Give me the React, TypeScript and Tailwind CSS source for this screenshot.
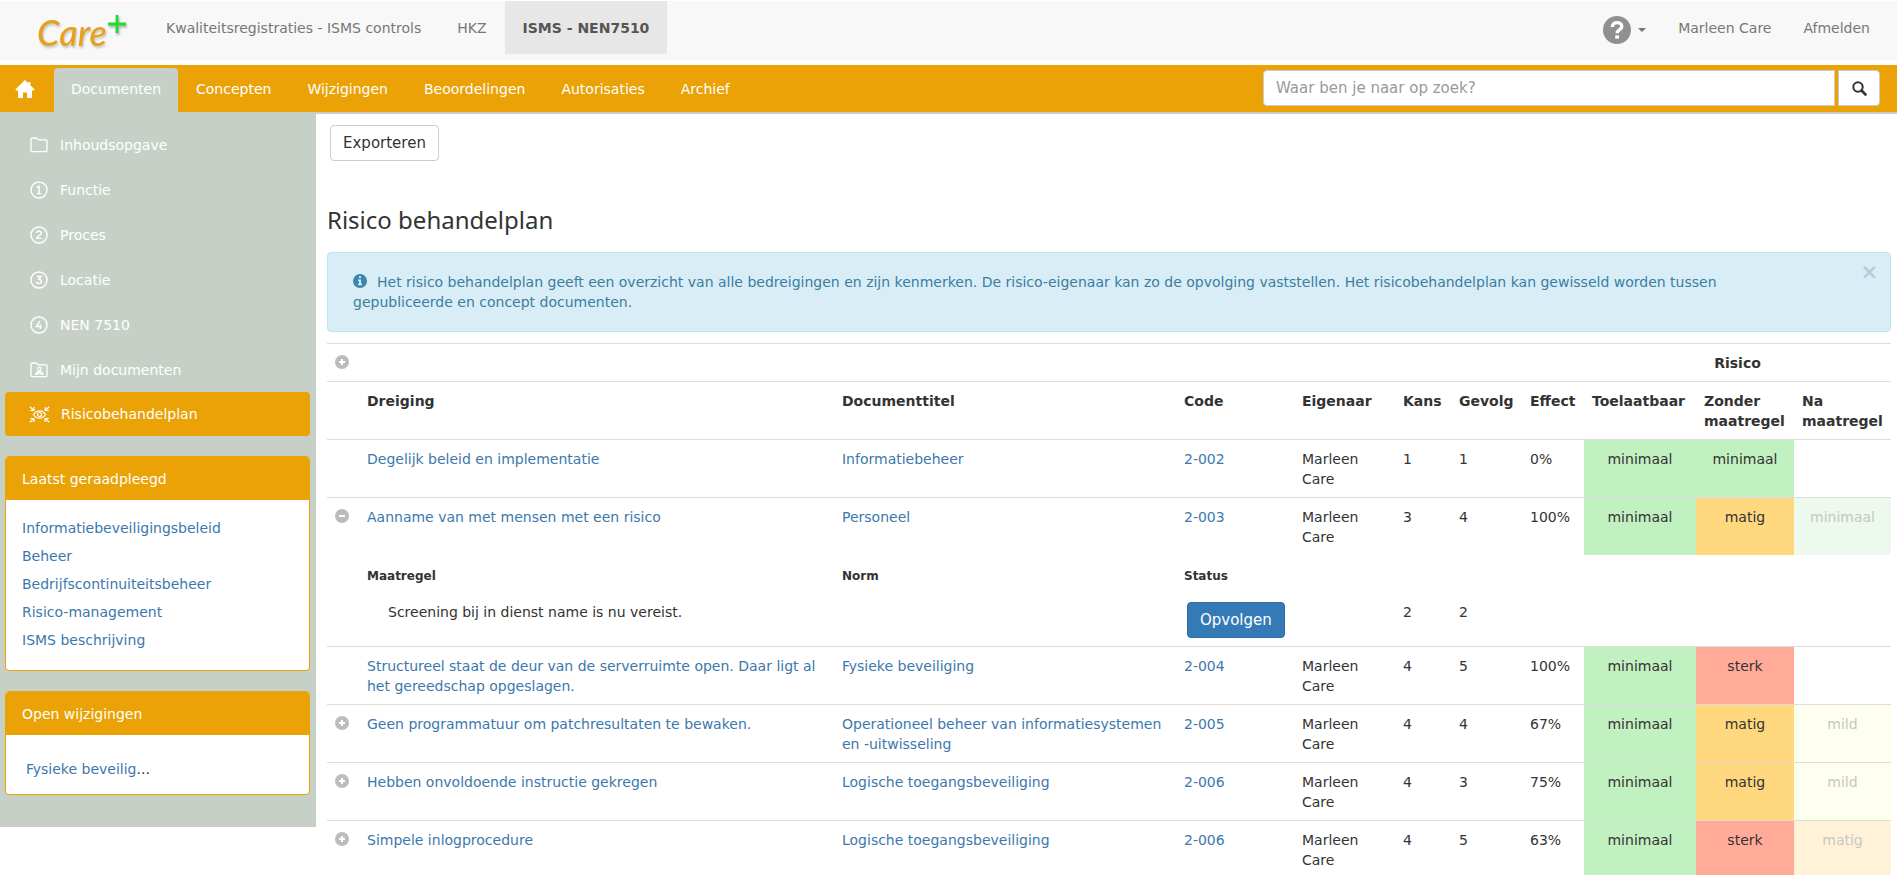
import type { ReactNode } from "react";

const FONT = "font-['Verdana','DejaVu_Sans',sans-serif]";

function CircleIcon({ kind, className }: { kind: "plus" | "minus" | "info" | "help"; className: string }) {
  return (
    <svg viewBox="0 0 14 14" className={className} aria-hidden="true">
      <circle cx="7" cy="7" r="7" fill="currentColor" />
      {kind === "plus" && <path d="M7 4v6M4 7h6" stroke="#fff" strokeWidth="2" />}
      {kind === "minus" && <path d="M4 7h6" stroke="#fff" strokeWidth="2" />}
      {kind === "info" && <path d="M6 2.2h2v1.8H6zM5 5.4h3v4.4h1v1.5H5V9.8h1V6.9H5z" fill="#d9edf7" />}
      {kind === "help" && (
        <>
          <path d="M4.7 5.5c0-1.5 1-2.200 2.300-2.200s2.400.7 2.400 1.900c0 1.700-2.300 1.500-2.300 3.400" fill="none" stroke="#fff" strokeWidth="1.700" />
          <rect x="6.1" y="9.700" width="1.900" height="1.600" fill="#fff" />
        </>
      )}
    </svg>
  );
}

function FolderIcon({ person }: { person?: boolean }) {
  return (
    <svg viewBox="0 0 18 16" className="h-4 w-[18px]" fill="none" stroke="currentColor" strokeWidth="1.3" aria-hidden="true">
      <path d="M1 13.5V2.2Q1 1 2.2 1H6l2.4 1.8h7.4Q17 2.800 17 4v9.500q0 1.200-1.200 1.200H2.200Q1 14.700 1 13.500z" />
      {person && (
        <>
          <circle cx="9.300" cy="6.700" r="1.600" />
          <path d="M6 12.300c.200-4 6.600-4 6.800 0M5 12.300h2.300l2-1.800 2 1.800h2.300" />
        </>
      )}
    </svg>
  );
}

function NumberIcon({ n }: { n: number }) {
  const digits: Record<number, string> = {
    1: "M6.800 6.600 9 5.200V12.600M6.900 12.600H11.100",
    2: "M6.600 7c0-2.400 4.800-2.400 4.800.100 0 2-4.400 3-4.700 5.300h4.900",
    3: "M6.700 5.500h4.300L8.800 8.300c3.700.100 3.200 4.300.200 4.300-1.400 0-2.300-.600-2.500-1.700",
    4: "M9.800 5 6.400 10.600h5.400M10.300 8.300v4.700",
  };
  return (
    <svg viewBox="0 0 18 18" className="size-[18px]" fill="none" stroke="currentColor" strokeWidth="1.400" aria-hidden="true">
      <circle cx="9" cy="9" r="8" />
      <path d={digits[n]} />
    </svg>
  );
}

function RiskIcon() {
  return (
    <svg viewBox="0 0 21 17" className="h-[17px] w-[21px]" fill="none" stroke="currentColor" strokeWidth="1.200" aria-hidden="true">
      <path d="M4.500 8.500c3-4.900 9-4.900 12 0-3 4.900-9 4.900-12 0z" />
      <circle cx="10.500" cy="8.500" r="2" />
      <path d="M.800.800 4.600 4.200M4.900 1v3.500H1.200M20.200.800 16.400 4.200M16.100 1v3.500h3.700M.800 16.200 4.600 12.800M4.900 16v-3.500H1.200M20.200 16.200 16.400 12.800M16.100 16v-3.500h3.700" />
    </svg>
  );
}

const sideItems: { label: string; icon: ReactNode }[] = [
  { label: "Inhoudsopgave", icon: <FolderIcon /> },
  { label: "Functie", icon: <NumberIcon n={1} /> },
  { label: "Proces", icon: <NumberIcon n={2} /> },
  { label: "Locatie", icon: <NumberIcon n={3} /> },
  { label: "NEN 7510", icon: <NumberIcon n={4} /> },
  { label: "Mijn documenten", icon: <FolderIcon person /> },
];

const recent = ["Informatiebeveiligingsbeleid", "Beheer", "Bedrijfscontinuiteitsbeheer", "Risico-management", "ISMS beschrijving"];

const tabs = ["Concepten", "Wijzigingen", "Beoordelingen", "Autorisaties", "Archief"];

type Level = "minimaal" | "matig" | "sterk" | "mild";

type Row = {
  toggle?: "plus" | "minus";
  threat: string;
  title: string;
  code: string;
  kans: number;
  gevolg: number;
  effect: string;
  without: Level;
  after?: Level;
};

const rows: Row[] = [
  { threat: "Degelijk beleid en implementatie", title: "Informatiebeheer", code: "2-002", kans: 1, gevolg: 1, effect: "0%", without: "minimaal" },
  { toggle: "minus", threat: "Aanname van met mensen met een risico", title: "Personeel", code: "2-003", kans: 3, gevolg: 4, effect: "100%", without: "matig", after: "minimaal" },
  { threat: "Structureel staat de deur van de serverruimte open. Daar ligt al het gereedschap opgeslagen.", title: "Fysieke beveiliging", code: "2-004", kans: 4, gevolg: 5, effect: "100%", without: "sterk" },
  { toggle: "plus", threat: "Geen programmatuur om patchresultaten te bewaken.", title: "Operationeel beheer van informatiesystemen en -uitwisseling", code: "2-005", kans: 4, gevolg: 4, effect: "67%", without: "matig", after: "mild" },
  { toggle: "plus", threat: "Hebben onvoldoende instructie gekregen", title: "Logische toegangsbeveiliging", code: "2-006", kans: 4, gevolg: 3, effect: "75%", without: "matig", after: "mild" },
  { toggle: "plus", threat: "Simpele inlogprocedure", title: "Logische toegangsbeveiliging", code: "2-006", kans: 4, gevolg: 5, effect: "63%", without: "sterk", after: "matig" },
];

const levelColor: Record<Level, string> = {
  minimaal: "bg-[#c1f0c1]",
  matig: "bg-[#ffd77f]",
  sterk: "bg-[#ffab97]",
  mild: "bg-[#ffffcc]",
};

const fadedColor: Record<Level, string> = {
  minimaal: "bg-[#ecf9ec]",
  matig: "bg-[#fff2d9]",
  sterk: "bg-[#ffe5df]",
  mild: "bg-[#fffff0]",
};

const cell = "px-2 pt-[9px] pb-2 align-top";
const subHead = "px-2 pt-[11px] pb-2 align-top";
const link = "text-[#3c78ac] hover:underline";

function Toggle({ kind }: { kind: "plus" | "minus" }) {
  return (
    <button type="button" aria-label={kind === "plus" ? "Uitklappen" : "Inklappen"} className="block pt-[2px]">
      <CircleIcon kind={kind} className="size-[14px] text-[#bcbcbc]" />
    </button>
  );
}

function RiskRow({ row }: { row: Row }) {
  return (
    <tr className="border-t border-[#ddd]">
      <td className={cell}>{row.toggle && <Toggle kind={row.toggle} />}</td>
      <td className={cell}><a href="#" className={link}>{row.threat}</a></td>
      <td className={cell}><a href="#" className={link}>{row.title}</a></td>
      <td className={cell}><a href="#" className={link}>{row.code}</a></td>
      <td className={cell}>Marleen Care</td>
      <td className={cell}>{row.kans}</td>
      <td className={cell}>{row.gevolg}</td>
      <td className={cell}>{row.effect}</td>
      <td className={`${cell} text-center ${levelColor.minimaal}`}>minimaal</td>
      <td className={`${cell} text-center ${levelColor[row.without]}`}>{row.without}</td>
      <td className={`${cell} text-center text-[#c4c8c4] ${row.after ? fadedColor[row.after] : ""}`}>{row.after}</td>
    </tr>
  );
}

function Panel({ title, children }: { title: string; children: ReactNode }) {
  return (
    <section className="mt-5 overflow-hidden rounded border border-[#eaa206] bg-white">
      <h2 className="flex h-[43px] items-center bg-[#eaa206] px-4 text-white">{title}</h2>
      {children}
    </section>
  );
}

export default function App() {
  return (
    <div className={`h-screen overflow-hidden bg-white text-sm leading-5 text-[#333] ${FONT}`}>
      <header className="flex h-[65px] items-start border-t border-b-[5px] border-t-white border-b-[#fdfdfb] bg-[#f8f8f8] text-[#777]">
        <a href="#" aria-label="Care+" className="flex w-[148px] shrink-0 items-start pt-[11px] pl-[37px]">
          <span className="pt-1 font-['Lato',sans-serif] text-4xl leading-8 font-medium text-[#e5a11c] italic drop-shadow-[1px_2px_1px_rgba(0,0,0,0.2)]">Care</span>
          <svg viewBox="0 0 20 20" className="mt-[2px] size-5 drop-shadow-[1px_2px_1px_rgba(0,0,0,0.3)]" aria-hidden="true">
            <path d="M10 1v18M1 10h18" stroke="#1fdd2f" strokeWidth="2.800" />
          </svg>
        </a>
        <nav className="flex">
          <a href="#" className="px-[18px] pt-[17px] pb-4">Kwaliteitsregistraties - ISMS controls</a>
          <a href="#" className="px-[18px] pt-[17px] pb-4">HKZ</a>
          <a href="#" className="bg-[#e7e7e7] px-[18px] pt-[17px] pb-4 font-bold text-[#555]">ISMS - NEN7510</a>
        </nav>
        <div className="ml-auto flex pr-[11px]">
          <button type="button" aria-label="Help" className="flex items-center gap-[7px] self-start px-4 pt-[15px]">
            <CircleIcon kind="help" className="size-7 text-[#909090]" />
            <span className="border-x-4 border-t-4 border-x-transparent border-t-[#777]" />
          </button>
          <a href="#" className="px-4 pt-[17px] pb-4">Marleen Care</a>
          <a href="#" className="px-4 pt-[17px] pb-4">Afmelden</a>
        </div>
      </header>

      <div className="flex h-[49px] items-start border-b-2 border-[#c7d0c7] bg-[#eaa206] text-white">
        <a href="#" aria-label="Home" className="flex h-[47px] w-[54px] items-center pl-[15px]">
          <svg viewBox="0 0 20 18" className="h-[18px] w-5" fill="currentColor" aria-hidden="true">
            <path d="M10 0 .300 9.600 1.200 10.500H3V17q0 1 1 1h4v-5.500h4V18h4q1 0 1-1v-6.500h1.800l.900-.900L15.500 5.400V2h-2.300v1.200z" />
          </svg>
        </a>
        <nav className="flex pt-[3px]">
          <a href="#" className="h-11 rounded-t bg-[#c7d0c7] px-[17px] py-[11px]">Documenten</a>
          {tabs.map((t) => (
            <a key={t} href="#" className="px-[18px] py-[11px]">{t}</a>
          ))}
        </nav>
        <form className="ml-auto flex w-[634px] gap-[3px] pt-[5px] pr-[17px]">
          <input
            type="search"
            aria-label="Zoeken"
            placeholder="Waar ben je naar op zoek?"
            className="h-9 min-w-0 flex-1 rounded-l border border-[#ccc] bg-white px-3 text-[15px] text-[#555] placeholder:text-[#999]"
          />
          <button type="button" aria-label="Zoek" className="flex h-9 w-[42px] items-center justify-center rounded-r border border-[#ccc] bg-white text-[#333]">
            <svg viewBox="0 0 15 15" className="size-[15px]" fill="none" stroke="currentColor" aria-hidden="true">
              <circle cx="6" cy="6" r="4.700" strokeWidth="2" />
              <path d="m9.500 9.500 4 4" strokeWidth="2.600" strokeLinecap="round" />
            </svg>
          </button>
        </form>
      </div>

      <div className="flex items-start">
        <aside className="w-[316px] shrink-0 bg-[#c7d0c7] pt-[9px] pr-[6px] pb-8 pl-[5px]">
          <nav className="text-white">
            <div className="flex flex-col gap-px">
              {sideItems.map((s) => (
                <a key={s.label} href="#" className="flex h-11 items-center gap-3 pl-[25px]">
                  {s.icon}
                  {s.label}
                </a>
              ))}
            </div>
            <a href="#" className="flex h-11 items-center gap-[11px] rounded bg-[#eaa206] pl-6">
              <RiskIcon />
              Risicobehandelplan
            </a>
          </nav>
          <Panel title="Laatst geraadpleegd">
            <ul className="px-4 pt-[14px] pb-4">
              {recent.map((r) => (
                <li key={r} className="py-1"><a href="#" className={link}>{r}</a></li>
              ))}
            </ul>
          </Panel>
          <Panel title="Open wijzigingen">
            <p className="px-5 pt-6 pb-[15px]"><a href="#" className={link}>Fysieke beveilig</a>...</p>
          </Panel>
        </aside>

        <main className="min-w-0 flex-1 pt-[11px] pr-[6px] pl-[11px]">
          <button type="button" className="ml-[3px] h-9 rounded border border-[#ccc] bg-white px-3 text-[15px]">Exporteren</button>
          <h1 className="mt-[43px] font-['Noto_Sans',sans-serif] text-2xl leading-8">Risico behandelplan</h1>
          <div role="alert" className="mt-4 flex items-start rounded border border-[#bce8f1] bg-[#d9edf7] py-[19px] pr-3 pl-[25px] text-[#3a7ea1]">
            <p className="flex-1 pr-[115px]">
              <CircleIcon kind="info" className="mr-[10px] inline-block size-[14px] align-[-1px] text-[#3d86b0]" />
              Het risico behandelplan geeft een overzicht van alle bedreigingen en zijn kenmerken. De risico-eigenaar kan zo de opvolging vaststellen. Het risicobehandelplan kan gewisseld worden tussen gepubliceerde en concept documenten.
            </p>
            <button type="button" aria-label="Sluiten" className="-mt-[10px] text-[21px] leading-5 font-bold text-[#afcfde]">×</button>
          </div>
          <table className="mt-[11px] w-full table-fixed border-collapse text-left">
            <colgroup>
              <col className="w-8" />
              <col />
              <col className="w-[342px]" />
              <col className="w-[118px]" />
              <col className="w-[101px]" />
              <col className="w-[56px]" />
              <col className="w-[71px]" />
              <col className="w-[62px]" />
              <col className="w-[112px]" />
              <col className="w-[98px]" />
              <col className="w-[97px]" />
            </colgroup>
            <thead>
              <tr className="border-t border-[#ddd]">
                <td className={cell} colSpan={8}><Toggle kind="plus" /></td>
                <th className={`${cell} text-center`} colSpan={3}>Risico</th>
              </tr>
              <tr className="border-t border-[#ddd]">
                <td className={cell} />
                <th className={cell}>Dreiging</th>
                <th className={cell}>Documenttitel</th>
                <th className={cell}>Code</th>
                <th className={cell}>Eigenaar</th>
                <th className={cell}>Kans</th>
                <th className={cell}>Gevolg</th>
                <th className={cell}>Effect</th>
                <th className={cell}>Toelaatbaar</th>
                <th className={cell}>Zonder maatregel</th>
                <th className={cell}>Na maatregel</th>
              </tr>
            </thead>
            <tbody>
              <RiskRow row={rows[0]} />
              <RiskRow row={rows[1]} />
              <tr className="text-xs leading-5">
                <td className={subHead} />
                <th className={subHead}>Maatregel</th>
                <th className={subHead}>Norm</th>
                <th className={subHead}>Status</th>
                <td className={subHead} colSpan={7} />
              </tr>
              <tr>
                <td className={cell} />
                <td className="py-2 pr-2 pl-[29px] align-top">Screening bij in dienst name is nu vereist.</td>
                <td className={cell} />
                <td className="py-2 pr-0 pl-[11px] align-top">
                  <button type="button" className="h-9 rounded border border-[#2e6da4] bg-[#337ab7] px-3 text-[15px] text-white">Opvolgen</button>
                </td>
                <td className={cell} />
                <td className="px-2 py-2 align-top">2</td>
                <td className="px-2 py-2 align-top">2</td>
                <td className={cell} colSpan={4} />
              </tr>
              {rows.slice(2).map((r) => (
                <RiskRow key={r.threat} row={r} />
              ))}
            </tbody>
          </table>
        </main>
      </div>
    </div>
  );
}
